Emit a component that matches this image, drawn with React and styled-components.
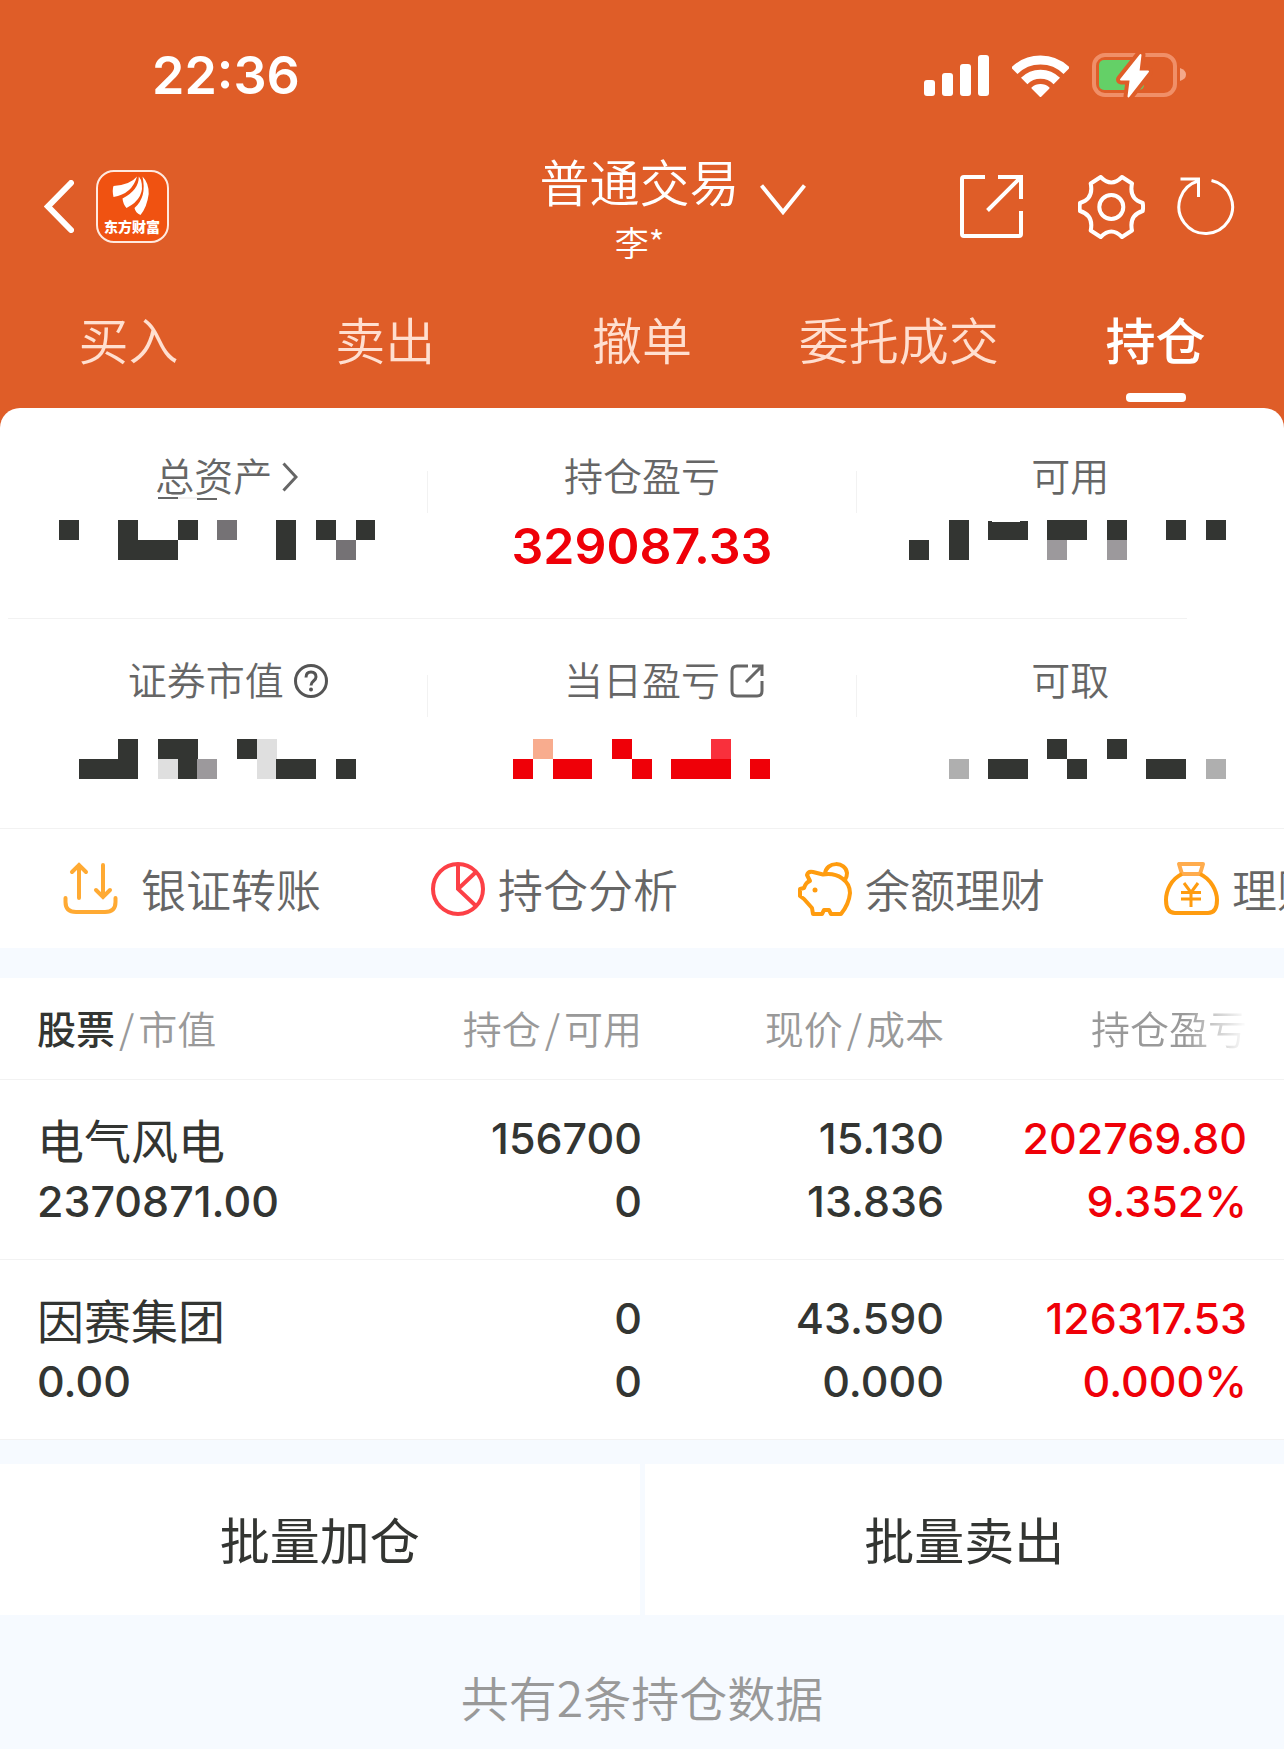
import React, { useState } from "react";
import styled, { createGlobalStyle } from "styled-components";

const GlobalStyle = createGlobalStyle`
  * {
    box-sizing: border-box;
  }
  body {
    margin: 0;
    background: #f6faff;
    color: #333532;
    font-family: "Noto Sans CJK SC", sans-serif;
    font-weight: 350;
  }
  button {
    margin: 0;
    padding: 0;
    border: 0;
    background: none;
    color: inherit;
    font: inherit;
    cursor: pointer;
  }
  svg {
    display: block;
    flex: none;
  }
`;

const Header = styled.header`
  background: #df5d28;
  color: #fff;
`;

const StatusBar = styled.div`
  display: flex;
  justify-content: space-between;
  align-items: center;
  height: 151px;
  padding: 0 98px 0 152px;
`;

const Time = styled.time`
  font: 600 52px/60px Inter, sans-serif;
`;

const StatusIcons = styled.div`
  display: flex;
  align-items: center;
  gap: 23px;
`;

const TitleBar = styled.div`
  display: grid;
  grid-template-columns: 1fr auto 1fr;
  align-items: center;
  padding: 0 49px 2px 44px;
`;

const TitleLeft = styled.div`
  display: flex;
  align-items: center;
  gap: 22px;
`;

const TitleRight = styled.div`
  display: flex;
  align-items: center;
  justify-content: space-between;
  padding-left: 20px;
`;

const TitleActions = styled.div`
  display: flex;
  align-items: center;

  button + button {
    margin-left: 54px;
  }
  button + button + button {
    margin-left: 32px;
  }
`;

const Account = styled.div`
  text-align: center;

  h1 {
    margin: 0 0 13px;
    font-weight: 350;
    font-size: 50px;
    line-height: 58px;
  }
  p {
    margin: 0;
    font-size: 34px;
    line-height: 40px;
  }
`;

const Tabs = styled.nav`
  display: grid;
  grid-template-columns: repeat(5, 1fr);
`;

const Tab = styled.button`
  display: flex;
  flex-direction: column;
  align-items: center;
  gap: 26px;
  padding: 45px 0 6px;
  font-size: 50px;
  line-height: 58px;
  font-weight: ${({ $active }) => ($active ? 500 : 350)};
  color: ${({ $active }) => ($active ? "#fff" : "#ffdfd0")};

  &::after {
    content: "";
    width: 60px;
    height: 9px;
    border-radius: 4px;
    background: ${({ $active }) => ($active ? "#fff" : "transparent")};
  }
`;

const PanelWrap = styled.div`
  background: #df5d28;
`;

const Panel = styled.section`
  background: #fff;
  border-radius: 20px 20px 0 0;
`;

const StatRow = styled.div`
  display: grid;
  grid-template-columns: 1fr 1px 1fr 1px 1fr;
  padding: ${({ $padding }) => $padding};
`;

const Stat = styled.div`
  display: flex;
  flex-direction: column;
  align-items: center;
  gap: ${({ $gap }) => $gap};
`;

const StatLabel = styled.div`
  display: grid;
  grid-template-columns: 1fr auto 1fr;
  align-items: center;
  column-gap: 10px;
  width: 100%;
  height: 40px;
  padding-right: ${({ $help }) => ($help ? "16px" : "0")};
  font-size: 39px;
  line-height: 34px;
  color: #666;

  span {
    grid-column: 2;
    padding-bottom: 6px;
  }
`;

const StatNumber = styled.strong`
  height: 63px;
  padding-top: 19px;
  font: 600 50px/60px Inter, sans-serif;
  color: #ef0008;
`;

const Divider = styled.i`
  height: 42px;
  margin-top: 14px;
  background: #f2f2f2;
`;

const Rule = styled.hr`
  height: 1px;
  margin: ${({ $inset }) => ($inset ? "0 97px 0 8px" : "0")};
  border: 0;
  background: #f2f2f2;
`;

const Shortcuts = styled.div`
  display: flex;
  height: 119px;
  padding-left: 63px;
  overflow: hidden;
`;

const Shortcut = styled.button`
  display: flex;
  align-items: center;
  gap: 12px;
  flex: none;
  width: 367px;
  font-size: 45px;
  line-height: 56px;
  color: #666;
  white-space: nowrap;
`;

const Holdings = styled.table`
  width: 100%;
  margin-top: 30px;
  background: #fff;
  table-layout: fixed;
  border-collapse: separate;
  border-spacing: 0;

  th,
  td {
    padding: 0;
    border-bottom: 1px solid #f2f2f2;
    text-align: right;
    font-weight: 350;
  }
  th {
    padding-bottom: 4px;
  }
  th:first-child,
  td:first-child {
    width: 340px;
    padding-left: 37px;
    text-align: left;
  }
  th:last-child,
  td:last-child {
    width: 340px;
    padding-right: 37px;
  }
`;

const HeadCell = styled.th`
  height: 102px;
  font-size: 39px;
  line-height: 48px;
  color: #999;

  i {
    margin: 0 4px;
    font-style: normal;
  }
  b {
    font-weight: 500;
    color: #333532;
  }
`;

const Fade = styled.span`
  mask-image: linear-gradient(to right, #000 60%, transparent);
`;

const HoldingRow = styled.tr`
  height: 180px;
`;

const Line = styled.div`
  font: 500 43px/63px Inter, sans-serif;
  color: ${({ $red }) => ($red ? "#ef0008" : "inherit")};
`;

const StockName = styled.div`
  font-size: 47px;
  font-weight: 400;
  line-height: 63px;
`;

const BatchBar = styled.div`
  display: grid;
  grid-template-columns: 1fr 1fr;
  gap: 5px;
  margin-top: 24px;
`;

const BatchButton = styled.button`
  height: 151px;
  padding-bottom: 4px;
  background: #fff;
  font-size: 50px;
  font-weight: 400;
  line-height: 60px;
`;

const Footer = styled.footer`
  padding: 51px 0 20px;
  font-size: 48px;
  line-height: 60px;
  text-align: center;
  color: #999;
`;

const SignalIcon = () => (
  <svg width="65" height="42" fill="#fff">
    <rect x="0" y="25" width="11" height="16" rx="3" />
    <rect x="18" y="18" width="11" height="23" rx="3" />
    <rect x="36" y="9" width="11" height="32" rx="3" />
    <rect x="54" y="0" width="11" height="41" rx="3" />
  </svg>
);

const WifiIcon = () => (
  <svg width="57" height="42" fill="none" stroke="#fff">
    <path d="M2.3 15.8A37.2 37.2 0 0 1 54.7 15.8" strokeWidth="9" />
    <path d="M12.2 26A23 23 0 0 1 44.8 26" strokeWidth="9" />
    <path
      d="M28.5 41 20.5 33A12 12 0 0 1 36.5 33Z"
      fill="#fff"
      strokeWidth="2"
      strokeLinejoin="round"
    />
  </svg>
);

const BatteryIcon = () => (
  <svg width="94" height="45">
    <rect x="2" y="2" width="81" height="40" rx="11" fill="none" stroke="#f08f68" strokeWidth="4" />
    <path d="M88 15Q94 17 94 21.500T88 28Z" fill="#f4a88a" />
    <rect x="7" y="7" width="45" height="30" rx="5" fill="#64d067" />
    <path
      d="M48.500 2 46.500 18.500H56L36.500 43.500 38.700 26.500H29Z"
      fill="#df5d28"
      stroke="#df5d28"
      strokeWidth="10"
      strokeLinejoin="round"
    />
    <path
      d="M48.500 2 46.500 18.500H56L36.500 43.500 38.700 26.500H29Z"
      fill="#fff"
      stroke="#fff"
      strokeWidth="2"
      strokeLinejoin="round"
    />
  </svg>
);

const BackIcon = () => (
  <svg width="30" height="53" fill="none" stroke="#fff" strokeWidth="6" strokeLinecap="round">
    <path d="M27 3 4 26.500 27 50" />
  </svg>
);

const Logo = () => (
  <svg width="73" height="73" role="img" aria-label="东方财富">
    <rect x="1" y="1" width="71" height="71" rx="17" fill="#f05211" stroke="#ffe9df" strokeWidth="2" />
    <g fill="#fff">
      <path d="M41 6.500Q34 15 17.500 16Q16 20 17.500 27Q36 24 41 6.500Z" />
      <path d="M42.800 6.500Q43 20 26.500 28.500Q27 34 30.500 38Q50 28 45 10Z" />
      <path d="M46.500 6.500Q53 13 52.700 24Q51 37 44.500 45Q39.500 43 38.500 38Q51 27 46.500 6.500Z" />
    </g>
    <text x="36" y="62" fill="#fff" fontSize="14" fontWeight="900" textAnchor="middle">
      东方财富
    </text>
  </svg>
);

const DownIcon = () => (
  <svg width="46" height="45" fill="none" stroke="#fff" strokeWidth="4">
    <path d="M1.500 1.500 23 28 44.500 1.500" />
  </svg>
);

const ShareIcon = () => (
  <svg width="64" height="64" fill="none" stroke="#fff" strokeWidth="4">
    <path d="M25 2H4Q2 2 2 4V59Q2 61 4 61H59Q61 61 61 59V36M38 2H61V24M27.500 35.500 60 3" />
  </svg>
);

const GearIcon = () => (
  <svg width="67" height="64" fill="none" stroke="#fff" strokeWidth="4" strokeLinejoin="round">
    <path d="M22.700 2Q33.300 13 44 2L54 8.500C52 18 55 25 64.700 28Q65.500 32 64.700 36C55 39 52 46 54 55.500L44 62Q33.300 51 22.700 62L12.700 55.500C14.700 46 11.700 39 2 36Q1.200 32 2 28C11.700 25 14.700 18 12.700 8.500Z" />
    <circle cx="33.300" cy="32" r="12" />
  </svg>
);

const RefreshIcon = () => (
  <svg width="58" height="60" fill="none" stroke="#fff" strokeWidth="3">
    <path d="M34.500 3.500A26.800 26.800 0 1 1 21 4M3.500 2H21.500V20" />
  </svg>
);

const ChevronIcon = () => (
  <svg width="16" height="30" fill="none" stroke="#666" strokeWidth="3">
    <path d="M1.500 1.500 14 15 1.500 28.500" />
  </svg>
);

const HelpIcon = () => (
  <svg width="34" height="34" fill="none" stroke="#555" strokeWidth="3">
    <circle cx="17" cy="17" r="15.500" />
    <path d="M12 13.500Q12 8 17 8T22 13Q22 15 19.500 17T17 21.500" />
    <circle cx="17" cy="25.500" r="2" fill="#555" stroke="none" />
  </svg>
);

const OpenIcon = () => (
  <svg width="34" height="34" fill="none" stroke="#666" strokeWidth="3">
    <path d="M18 2H7Q2 2 2 7V27Q2 32 7 32H27Q32 32 32 27V17M22 2H32V12M16 18 31.500 2.500" />
  </svg>
);

// the first drawing keeps some room before its label
const TransferIcon = () => (
  <svg width="66" height="54" fill="none" stroke="#ffaa33" strokeWidth="4" strokeLinecap="round">
    <path d="M16 36V3M9 10 16 3 23 10M40 3V35M33 28 40 35 47 28M2.500 36V40Q2.500 50 13 50H42Q52.500 50 52.500 40V36" />
  </svg>
);

const PieIcon = () => (
  <svg width="56" height="54" fill="none" stroke="#fc4046" strokeWidth="4">
    <circle cx="28" cy="27" r="25" />
    <path d="M28 2V27L46 44M28 27 46 10" />
  </svg>
);

const PigIcon = () => (
  <svg width="56" height="54" fill="none" stroke="#ff9c0f" strokeWidth="4" strokeLinejoin="round">
    <path d="M13 19 10 13Q11 9 16 10L26 12.500C41 10 53 19 53 31Q52 42 44 52H34L32 48H27L25 52H16L15 46L7 37L3 34V27L7 26Q9 20 13 19Z" />
    <path d="M28 12C29 -1 49 -1 50 11Q50 15 48 18" />
    <circle cx="18" cy="28" r="2.500" fill="#ff9c0f" stroke="none" />
  </svg>
);

const BagIcon = () => (
  <svg width="56" height="54" fill="none" stroke="#ff9c0f" strokeWidth="4" strokeLinejoin="round">
    <path d="M15 2H39L36 12H18Z" stroke="#ffac4d" />
    <path d="M18 12C7 17 2 29 2 38Q2 51 11 51H44Q53 51 53 38C53 29 47 17 36 12" />
    <path d="M20 21 27 30.500 34 21M27 30V45M17 30.500H37M17 37H37" strokeWidth="3" />
  </svg>
);

const BLOCK = 19.77;
const COLORS = {
  k: "#333532",
  m: "#757275",
  g: "#9c999c",
  a: "#afafaf",
  l: "#dfdfdf",
  r: "#ef0008",
  s: "#f9303c",
  p: "#f8ac8e",
};

// a hidden amount: two lines of blocks, one letter for each block
const Mosaic = ({ rows, x = 0, children }) => (
  <svg width={Math.round(rows[0].length * BLOCK) + 6} height="63" shapeRendering="crispEdges" aria-label="已隐藏">
    {rows.map((row, r) =>
      [...row].map(
        (c, i) =>
          COLORS[c] && (
            <rect
              key={`${r}-${i}`}
              x={Math.round(x + i * BLOCK)}
              y={23 + r * 20}
              width="20"
              height="20"
              fill={COLORS[c]}
            />
          )
      )
    )}
    {children}
  </svg>
);

const tabs = ["买入", "卖出", "撤单", "委托成交", "持仓"];

const shortcuts = [
  { label: "银证转账", Icon: TransferIcon },
  { label: "持仓分析", Icon: PieIcon },
  { label: "余额理财", Icon: PigIcon },
  { label: "理财", Icon: BagIcon },
];

const holdings = [
  {
    name: "电气风电",
    value: "2370871.00",
    amount: "156700",
    available: "0",
    price: "15.130",
    cost: "13.836",
    profit: "202769.80",
    rate: "9.352%",
  },
  {
    name: "因赛集团",
    value: "0.00",
    amount: "0",
    available: "0",
    price: "43.590",
    cost: "0.000",
    profit: "126317.53",
    rate: "0.000%",
  },
];

const Summary = () => (
  <>
    <StatRow $padding="49px 0 58px">
      <Stat>
        <StatLabel>
          <span>总资产</span>
          <ChevronIcon />
        </StatLabel>
        <Mosaic x={6} rows={["k..k..k.m..k.k.k", "...kkk.....k..m."]}>
          <path d="M105 0H125V2H105ZM144 1H164V3H144Z" fill="#666" />
          <path d="M125 0H144V2H125Z" fill="#f3f1f1" />
        </Mosaic>
      </Stat>
      <Divider />
      <Stat>
        <StatLabel>
          <span>持仓盈亏</span>
        </StatLabel>
        <StatNumber>329087.33</StatNumber>
      </Stat>
      <Divider />
      <Stat>
        <StatLabel>
          <span>可用</span>
        </StatLabel>
        <Mosaic rows={["..k.kk.kk.k..k.k", "k.k....g..g....."]}>
          <path d="M79 23H119V24Q92 26 79 24Z" fill="#fff" />
        </Mosaic>
      </Stat>
    </StatRow>
    <Rule $inset />
    <StatRow $padding="42px 0 49px">
      <Stat $gap="15px">
        <StatLabel $help>
          <span>证券市值</span>
          <HelpIcon />
        </StatLabel>
        <Mosaic x={6} rows={["...k.kk..kl.....", ".kkk.lkg..lkk.k."]} />
      </Stat>
      <Divider />
      <Stat $gap="15px">
        <StatLabel>
          <span>当日盈亏</span>
          <OpenIcon />
        </StatLabel>
        <Mosaic x={3} rows={[".p...r....s..", "r.rr..r.rrr.r"]} />
      </Stat>
      <Divider />
      <Stat $gap="15px">
        <StatLabel>
          <span>可取</span>
        </StatLabel>
        <Mosaic rows={[".......k..k.....", "..a.kk..k...kk.a"]} />
      </Stat>
    </StatRow>
    <Rule />
  </>
);

const HoldingsTable = () => (
  <Holdings>
    <thead>
      <tr>
        <HeadCell>
          <b>股票</b>
          <i>/</i>市值
        </HeadCell>
        <HeadCell>
          持仓<i>/</i>可用
        </HeadCell>
        <HeadCell>
          现价<i>/</i>成本
        </HeadCell>
        <HeadCell>
          <Fade>持仓盈亏</Fade>
        </HeadCell>
      </tr>
    </thead>
    <tbody>
      {holdings.map((item) => (
        <HoldingRow key={item.name}>
          <td>
            <StockName>{item.name}</StockName>
            <Line>{item.value}</Line>
          </td>
          <td>
            <Line>{item.amount}</Line>
            <Line>{item.available}</Line>
          </td>
          <td>
            <Line>{item.price}</Line>
            <Line>{item.cost}</Line>
          </td>
          <td>
            <Line $red>{item.profit}</Line>
            <Line $red>{item.rate}</Line>
          </td>
        </HoldingRow>
      ))}
    </tbody>
  </Holdings>
);

const App = () => {
  const [active, setActive] = useState("持仓");

  return (
    <>
      <GlobalStyle />
      <Header>
        <StatusBar>
          <Time>22:36</Time>
          <StatusIcons>
            <SignalIcon />
            <WifiIcon />
            <BatteryIcon />
          </StatusIcons>
        </StatusBar>
        <TitleBar>
          <TitleLeft>
            <button aria-label="返回">
              <BackIcon />
            </button>
            <Logo />
          </TitleLeft>
          <Account>
            <h1>普通交易</h1>
            <p>李*</p>
          </Account>
          <TitleRight>
            <button aria-label="切换账户">
              <DownIcon />
            </button>
            <TitleActions>
              <button aria-label="分享">
                <ShareIcon />
              </button>
              <button aria-label="设置">
                <GearIcon />
              </button>
              <button aria-label="刷新">
                <RefreshIcon />
              </button>
            </TitleActions>
          </TitleRight>
        </TitleBar>
        <Tabs>
          {tabs.map((tab) => (
            <Tab key={tab} $active={tab === active} onClick={() => setActive(tab)}>
              {tab}
            </Tab>
          ))}
        </Tabs>
      </Header>
      <PanelWrap>
        <Panel>
          <Summary />
          <Shortcuts>
            {shortcuts.map(({ label, Icon }) => (
              <Shortcut key={label}>
                <Icon />
                {label}
              </Shortcut>
            ))}
          </Shortcuts>
        </Panel>
      </PanelWrap>
      <HoldingsTable />
      <BatchBar>
        <BatchButton>批量加仓</BatchButton>
        <BatchButton>批量卖出</BatchButton>
      </BatchBar>
      <Footer>共有2条持仓数据</Footer>
    </>
  );
};

export default App;
